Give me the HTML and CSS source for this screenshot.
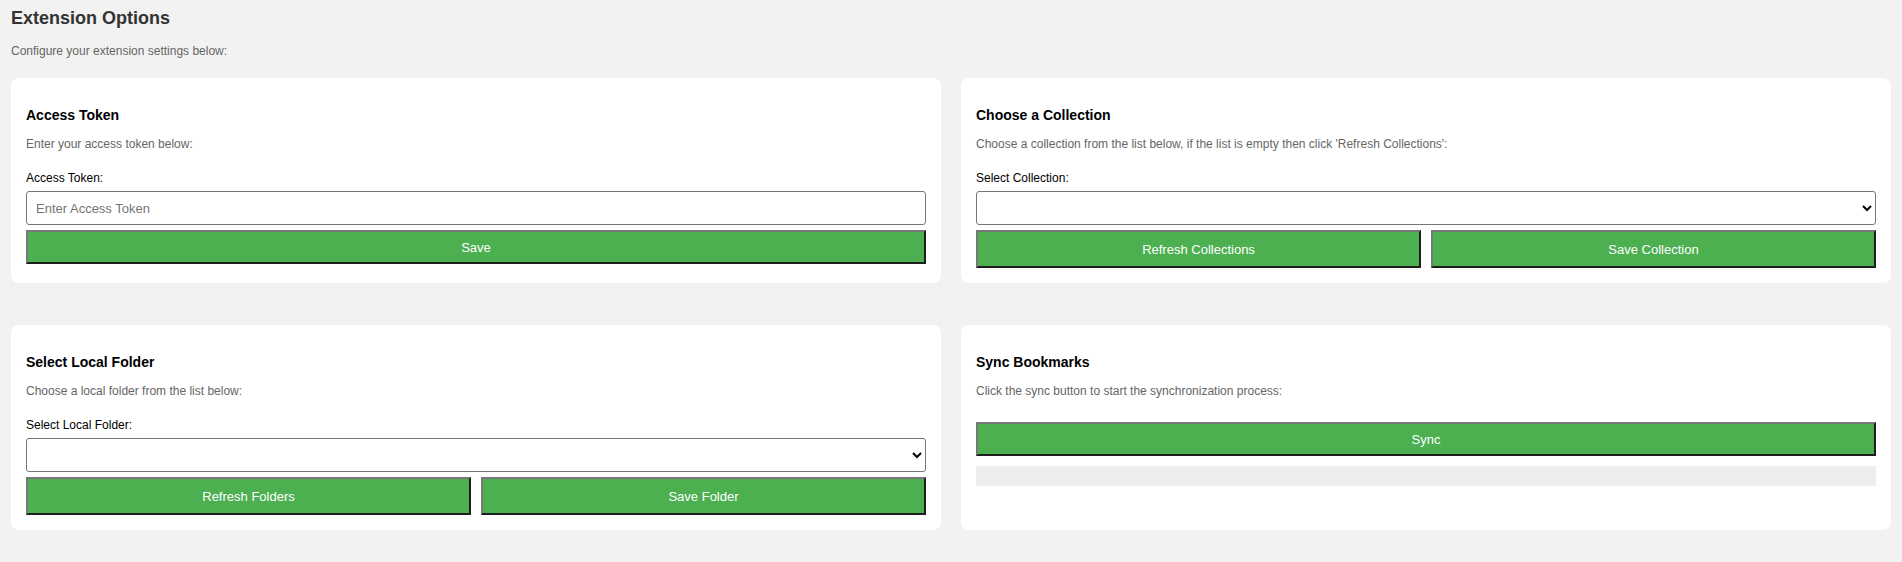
FILE: index.html
```html
<!DOCTYPE html>
<html lang="en">
<head>
<meta charset="utf-8">
<title>Extension Options</title>
<link rel="stylesheet" href="styles.css">
</head>
<body>
  <h1 class="page-title">Extension Options</h1>
  <p class="page-sub">Configure your extension settings below:</p>
  <div class="grid">
    <section class="card">
      <h2 class="card-title">Access Token</h2>
      <p class="card-desc">Enter your access token below:</p>
      <label class="field-label" for="token">Access Token:</label>
      <input class="field" id="token" type="text" placeholder="Enter Access Token">
      <button class="btn btn-single">Save</button>
    </section>
    <section class="card">
      <h2 class="card-title">Choose a Collection</h2>
      <p class="card-desc">Choose a collection from the list below, if the list is empty then click 'Refresh Collections':</p>
      <label class="field-label" for="collection">Select Collection:</label>
      <select class="field select" id="collection"></select>
      <div class="btn-row">
        <button class="btn btn-double">Refresh Collections</button>
        <button class="btn btn-double">Save Collection</button>
      </div>
    </section>
    <section class="card">
      <h2 class="card-title">Select Local Folder</h2>
      <p class="card-desc">Choose a local folder from the list below:</p>
      <label class="field-label" for="folder">Select Local Folder:</label>
      <select class="field select" id="folder"></select>
      <div class="btn-row">
        <button class="btn btn-double">Refresh Folders</button>
        <button class="btn btn-double">Save Folder</button>
      </div>
    </section>
    <section class="card">
      <h2 class="card-title">Sync Bookmarks</h2>
      <p class="card-desc">Click the sync button to start the synchronization process:</p>
      <button class="btn btn-single btn-sync">Sync</button>
      <div class="progress"></div>
    </section>
  </div>
</body>
</html>
```
FILE: styles.css
```css
html, body {
  margin: 0;
  padding: 0;
}
body {
  background: #f2f2f2;
  font-family: "Liberation Sans", Arial, sans-serif;
  padding: 0 11px;
}
.page-title {
  margin: 8px 0 0;
  font-size: 18px;
  line-height: 21px;
  font-weight: bold;
  color: #333;
}
.page-sub {
  margin: 15px 0 0;
  font-size: 12px;
  line-height: 14px;
  color: #666;
}
.grid {
  margin-top: 20px;
  display: grid;
  grid-template-columns: 1fr 1fr;
  column-gap: 20px;
  row-gap: 42px;
}
.card {
  background: #fff;
  border-radius: 8px;
  padding: 15px;
  display: flex;
  flex-direction: column;
}
.card-title {
  margin: 14px 0 0;
  font-size: 14px;
  line-height: 16px;
  font-weight: bold;
  color: #000;
}
.card-desc {
  margin: 14px 0 0;
  font-size: 12px;
  line-height: 14px;
  color: #666;
}
.field-label {
  margin-top: 20px;
  font-size: 12px;
  line-height: 14px;
  color: #000;
}
.field {
  margin-top: 6px;
  box-sizing: border-box;
  width: 100%;
  height: 34px;
  border: 1px solid #767676;
  border-radius: 3px;
  background: #fff;
  font-family: "Liberation Sans", Arial, sans-serif;
  font-size: 13px;
  padding: 0 9px;
  color: #000;
}
.field::placeholder {
  color: #757575;
}
.select {
  padding: 0 4px;
}
.btn {
  box-sizing: border-box;
  background: #4caf50;
  color: #fff;
  font-family: "Liberation Sans", Arial, sans-serif;
  font-size: 13px;
  border-width: 2px;
  border-style: solid;
  border-color: #777 #1e1e1e #1e1e1e #777;
  padding: 0;
  margin: 0;
}
.btn-single {
  margin-top: 5px;
  width: 100%;
  height: 34px;
}
.btn-row {
  margin-top: 5px;
  display: flex;
  gap: 10px;
}
.btn-double {
  flex: 1 1 0;
  height: 38px;
}
.btn-sync {
  margin-top: 24px;
}
.progress {
  margin-top: 10px;
  height: 20px;
  background: #eee;
}
```
